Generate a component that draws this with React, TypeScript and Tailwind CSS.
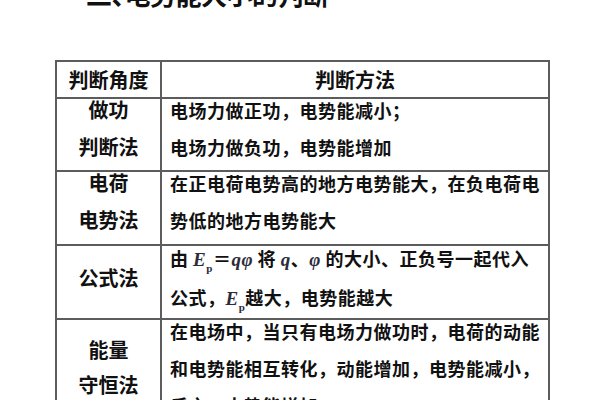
const cjk = "font-['Noto_Sans_CJK_SC','Noto_Sans',sans-serif]";

function Math({ children }: { children: React.ReactNode }) {
  return <span className="font-['Liberation_Serif',serif] italic text-[19px] text-[#2b2b3b]">{children}</span>;
}

function Ep() {
  return (
    <Math>
      E<sub className="text-[11px] not-italic font-['Liberation_Serif',serif] align-[-3px]">p</sub>
    </Math>
  );
}

function Lines({ lines, pt = 'pt-0' }: { lines: React.ReactNode[]; pt?: string }) {
  return (
    <div className={`flex flex-col gap-[15px] ${pt} pl-[8px]`}>
      {lines.map((l, i) => (
        <div key={i} className="leading-[22px] whitespace-nowrap">{l}</div>
      ))}
    </div>
  );
}

export default function App() {
  return (
    <div className={`w-[600px] h-[400px] overflow-hidden bg-white text-[#111] ${cjk}`}>
      <h2 className="-mt-[19px] ml-[86px] text-[26px] leading-[26px] font-bold whitespace-nowrap tracking-[-0.5px]">
        二<span className="inline-block w-[13px] overflow-hidden align-bottom">、</span>电势能大小的判断
      </h2>

      <div className="mt-[53px] ml-[55px] w-[495px] border-2 border-b-0 border-[#5c5c5c]">
        {/* header */}
        <div className="grid grid-cols-[105px_1fr] h-[35px] font-bold text-[20px]">
          <div className="border-r-2 border-[#5c5c5c] flex items-center justify-center">判断角度</div>
          <div className="flex items-center justify-center">判断方法</div>
        </div>

        {/* 做功判断法 */}
        <div className="grid grid-cols-[105px_1fr] h-[73px] border-t-2 border-[#5c5c5c] font-semibold">
          <div className="border-r-2 border-[#5c5c5c] flex flex-col items-center gap-[15px] text-[20px]">
            <div className="leading-[22px]">做功</div>
            <div className="leading-[22px]">判断法</div>
          </div>
          <div className="text-[18px] tracking-[0.5px]">
            <Lines lines={['电场力做正功，电势能减小；', '电场力做负功，电势能增加']} />
          </div>
        </div>

        {/* 电荷电势法 */}
        <div className="grid grid-cols-[105px_1fr] h-[74px] border-t-2 border-[#5c5c5c] font-semibold">
          <div className="border-r-2 border-[#5c5c5c] flex flex-col items-center gap-[15px] text-[20px]">
            <div className="leading-[22px]">电荷</div>
            <div className="leading-[22px]">电势法</div>
          </div>
          <div className="text-[18px] tracking-[0.5px]">
            <Lines lines={['在正电荷电势高的地方电势能大，在负电荷电', '势低的地方电势能大']} />
          </div>
        </div>

        {/* 公式法 */}
        <div className="grid grid-cols-[105px_1fr] h-[74px] border-t-2 border-[#5c5c5c] font-semibold">
          <div className="border-r-2 border-[#5c5c5c] flex items-center justify-center pb-[8px] text-[20px]">
            公式法
          </div>
          <div className="text-[18px] tracking-[0.5px]">
            <Lines
              pt="pt-[1px]"
              lines={[
                <>
                  由 <Ep />＝<Math>qφ</Math> 将 <Math>q</Math>、<Math>φ</Math> 的大小、正负号一起代入
                </>,
                <>
                  公式，<Ep />越大，电势能越大
                </>,
              ]}
            />
          </div>
        </div>

        {/* 能量守恒法 */}
        <div className="grid grid-cols-[105px_1fr] h-[110px] border-t-2 border-[#5c5c5c] font-semibold">
          <div className="border-r-2 border-[#5c5c5c] flex flex-col items-center gap-[13px] pt-[19px] text-[20px]">
            <div className="leading-[22px]">能量</div>
            <div className="leading-[22px]">守恒法</div>
          </div>
          <div className="text-[18px] tracking-[0.5px]">
            <Lines
              lines={[
                '在电场中，当只有电场力做功时，电荷的动能',
                '和电势能相互转化，动能增加，电势能减小，',
                '反之，电势能增加',
              ]}
            />
          </div>
        </div>
      </div>
    </div>
  );
}
